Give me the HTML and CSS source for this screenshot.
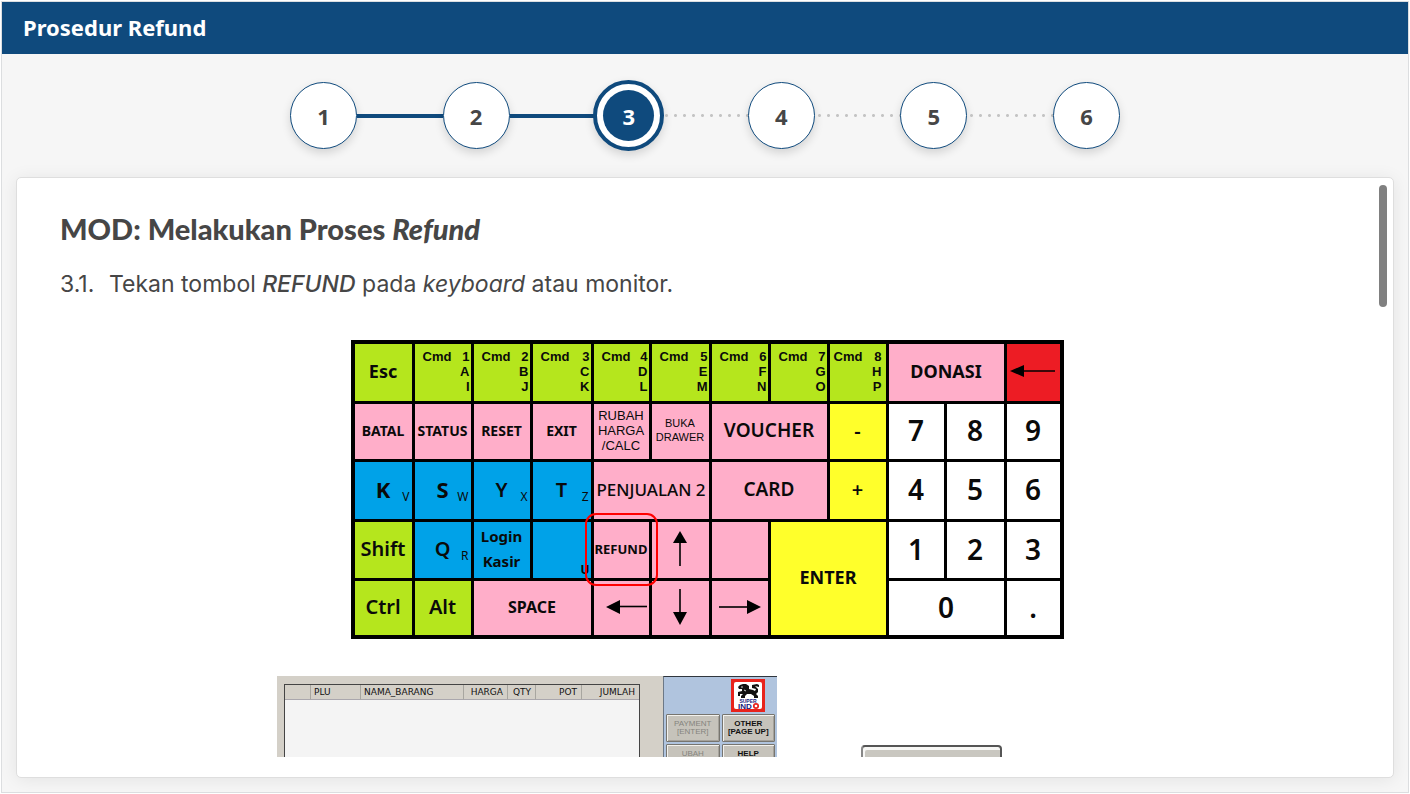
FILE: index.html
```html
<!DOCTYPE html>
<html lang="id">
<head>
<meta charset="utf-8">
<title>Prosedur Refund</title>
<link rel="stylesheet" href="styles.css">
</head>
<body>
<div class="app">
  <header class="topbar"><h1 class="topbar-title">Prosedur Refund</h1></header>
  <nav class="stepper">
    <button type="button" class="step">1</button>
    <span class="link done"></span>
    <button type="button" class="step">2</button>
    <span class="link done"></span>
    <button type="button" class="step active"><span class="step-core">3</span></button>
    <span class="link"></span>
    <button type="button" class="step">4</button>
    <span class="link"></span>
    <button type="button" class="step">5</button>
    <span class="link"></span>
    <button type="button" class="step">6</button>
  </nav>
  <main class="card">
    <div class="scroll">
      <h2 class="title">MOD: Melakukan Proses <em>Refund</em></h2>
      <div class="instruction"><span class="number">3.1.</span><p class="sentence">Tekan tombol <em class="strong">REFUND</em> pada <em>keyboard</em> atau monitor.</p></div>
      <div class="keyboard">
        <button type="button" class="key green k18">Esc</button>
        <button type="button" class="key green cmd"><span class="cmd-top"><span>Cmd</span><span>1</span></span><span>A</span><span>I</span></button>
        <button type="button" class="key green cmd"><span class="cmd-top"><span>Cmd</span><span>2</span></span><span>B</span><span>J</span></button>
        <button type="button" class="key green cmd"><span class="cmd-top"><span>Cmd</span><span>3</span></span><span>C</span><span>K</span></button>
        <button type="button" class="key green cmd"><span class="cmd-top"><span>Cmd</span><span>4</span></span><span>D</span><span>L</span></button>
        <button type="button" class="key green cmd"><span class="cmd-top"><span>Cmd</span><span>5</span></span><span>E</span><span>M</span></button>
        <button type="button" class="key green cmd"><span class="cmd-top"><span>Cmd</span><span>6</span></span><span>F</span><span>N</span></button>
        <button type="button" class="key green cmd"><span class="cmd-top"><span>Cmd</span><span>7</span></span><span>G</span><span>O</span></button>
        <button type="button" class="key green cmd last"><span class="cmd-top"><span>Cmd</span><span>8</span></span><span>H</span><span>P</span></button>
        <button type="button" class="key pink wide k18">DONASI</button>
        <button type="button" class="key red" aria-label="Backspace"><svg width="46" height="14" viewBox="0 0 46 14"><path d="M12 7H45" stroke="#000" stroke-width="1.6"/><path d="M0 7L14 1V13Z"/></svg></button>

        <button type="button" class="key pink k14">BATAL</button>
        <button type="button" class="key pink k14">STATUS</button>
        <button type="button" class="key pink k14">RESET</button>
        <button type="button" class="key pink k14">EXIT</button>
        <button type="button" class="key pink thin">RUBAH<br>HARGA<br>/CALC</button>
        <button type="button" class="key pink thin small">BUKA<br>DRAWER</button>
        <button type="button" class="key pink wide k19">VOUCHER</button>
        <button type="button" class="key yellow k20">-</button>
        <button type="button" class="key white digit">7</button>
        <button type="button" class="key white digit">8</button>
        <button type="button" class="key white digit">9</button>

        <button type="button" class="key blue k22">K<span class="alt">V</span></button>
        <button type="button" class="key blue k22">S<span class="alt">W</span></button>
        <button type="button" class="key blue k20">Y<span class="alt">X</span></button>
        <button type="button" class="key blue k20">T<span class="alt">Z</span></button>
        <button type="button" class="key pink wide k17">PENJUALAN 2</button>
        <button type="button" class="key pink wide k19">CARD</button>
        <button type="button" class="key yellow k20">+</button>
        <button type="button" class="key white digit">4</button>
        <button type="button" class="key white digit">5</button>
        <button type="button" class="key white digit">6</button>

        <button type="button" class="key green k20">Shift</button>
        <button type="button" class="key blue k20">Q<span class="alt">R</span></button>
        <button type="button" class="key blue login">Login<br>Kasir</button>
        <button type="button" class="key blue"><span class="alt bold">U</span></button>
        <button type="button" class="key pink marked k13">REFUND</button>
        <button type="button" class="key pink" aria-label="Atas"><svg width="14" height="36" viewBox="0 0 14 36"><path d="M7 8V35" stroke="#000" stroke-width="1.6"/><path d="M7 0L14 12H0Z"/></svg></button>
        <button type="button" class="key pink" aria-label="Kosong"></button>
        <button type="button" class="key yellow enter k18">ENTER</button>
        <button type="button" class="key white digit">1</button>
        <button type="button" class="key white digit">2</button>
        <button type="button" class="key white digit">3</button>

        <button type="button" class="key green k20">Ctrl</button>
        <button type="button" class="key green k20">Alt</button>
        <button type="button" class="key pink wide k16">SPACE</button>
        <button type="button" class="key pink arrow-left" aria-label="Kiri"><svg width="42" height="14" viewBox="0 0 42 14"><path d="M10 6.500H41" stroke="#000" stroke-width="1.6"/><path d="M0 7L14 0V14Z"/></svg></button>
        <button type="button" class="key pink" aria-label="Bawah"><svg width="14" height="36" viewBox="0 0 14 36"><path d="M7 0V26" stroke="#000" stroke-width="1.6"/><path d="M7 36L14 23H0Z"/></svg></button>
        <button type="button" class="key pink" aria-label="Kanan"><svg width="42" height="14" viewBox="0 0 42 14"><path d="M0 7H32" stroke="#000" stroke-width="1.6"/><path d="M42 7L28 0V14Z"/></svg></button>
        <button type="button" class="key white wide digit">0</button>
        <button type="button" class="key white digit">.</button>
      </div>
      <div class="pictures">
        <div class="monitor">
          <div class="monitor-main">
            <table class="items">
              <colgroup><col class="c-mark"><col class="c-plu"><col class="c-name"><col class="c-price"><col class="c-qty"><col class="c-pot"><col class="c-sum"></colgroup>
              <thead><tr><th></th><th>PLU</th><th>NAMA_BARANG</th><th class="right">HARGA</th><th class="right">QTY</th><th class="right">POT</th><th class="right">JUMLAH</th></tr></thead>
              <tbody><tr><td colspan="7"></td></tr></tbody>
            </table>
          </div>
          <div class="monitor-side">
            <svg class="logo" width="34" height="33" viewBox="0 0 34 33" role="img" aria-label="Super Indo">
              <rect width="34" height="33" fill="#e8231c"/>
              <rect x="3" y="3" width="28" height="27" rx="2" fill="#fff"/>
              <path fill="#111" d="M7 8L9 6L12 5H15L18 7V10L22 11L24 12L25 10L21 9V6L26 5L28 6V8L24 7L27 10V13L25 15L27 17V19H23V17L20 15H16L14 17V19H10V17L12 15H9V17H7V13L11 12V10H8Z"/>
              <path d="M10 8H12M13 11L15 12" stroke="#fff" stroke-width=".8"/>
              <text x="17" y="23.500" text-anchor="middle" class="logo-super">SUPER</text>
              <text x="7" y="30" class="logo-indo">IND</text>
              <circle cx="25" cy="27" r="2.200" fill="none" stroke="#e8231c" stroke-width="1.700"/>
            </svg>
            <div class="commands">
              <button type="button" class="command" disabled>PAYMENT<br>[ENTER]</button>
              <button type="button" class="command">OTHER<br>[PAGE UP]</button>
              <button type="button" class="command single" disabled>UBAH</button>
              <button type="button" class="command single">HELP</button>
            </div>
          </div>
        </div>
        <button type="button" class="zoomed-key" aria-label="Refund"></button>
      </div>
    </div>
    <div class="thumb"></div>
  </main>
</div>
</body>
</html>
```
FILE: styles.css
```css
* { box-sizing: border-box; }
body { margin: 0; background: #fff; color: #464646; font-family: "Noto Sans", sans-serif; }
button { margin: 0; padding: 0; border: 0; font: inherit; color: inherit; }
.app { display: flex; flex-direction: column; height: calc(100vh - 2px); margin: 1px; border: 1px solid #dcdee0; background: #f6f6f6; overflow: hidden; }
.topbar { display: flex; align-items: center; flex: none; height: 52px; padding: 0 21px 2px; background: #0f4a7d; }
.topbar-title { margin: 0; color: #fff; font-size: 22px; line-height: 30px; font-weight: 700; }

.stepper { display: flex; align-items: center; flex: none; width: 100%; max-width: 830px; height: 123px; margin: 0 auto; }
.step { display: flex; align-items: center; justify-content: center; flex: none; width: 67px; height: 67px; border: 1px solid #0f4a7d; border-radius: 50%; background: #fff; font-size: 22px; line-height: 30px; font-weight: 700; box-shadow: 0 4px 10px rgba(0, 0, 0, .14); }
.step.active { width: 71px; height: 71px; margin: 0 -2px; border-width: 4px; color: #fff; }
.step-core { display: flex; align-items: center; justify-content: center; width: 51px; height: 51px; border-radius: 50%; background: #0f4a7d; }
.link { flex: 1; height: 3px; background: radial-gradient(circle, #c4c4c4 1px, transparent 2px) 0 0 / 9px 3px; }
.link.done { height: 4px; background: #0f4a7d; }

.card { display: flex; flex: 1; min-height: 0; margin: 0 14px 14px; padding: 7px 6px 20px 43px; border: 1px solid #dedede; border-radius: 5px; background: #fff; box-shadow: 0 2px 18px rgba(0, 0, 0, .08); }
.scroll { flex: 1; min-width: 0; padding-right: 25px; overflow: hidden; }
.thumb { flex: none; width: 8px; height: 122px; border-radius: 4px; background: #808080; }
.title { margin: 24px 0 0; font-family: Lato, sans-serif; font-size: 29px; line-height: 40px; font-weight: 900; }
.instruction { display: flex; margin-top: 19px; font-family: Inter, sans-serif; font-size: 23px; line-height: 32px; }
.number { flex: none; width: 49px; }
.sentence { margin: 0; }
.strong { font-weight: 500; }

.keyboard { display: grid; grid-template-columns: 57px 56px 56px 58px 55px 57px 56px 56px 56px 55px 57px 53px; grid-template-rows: 57px 55px 57px 56px 54px; gap: 3px; width: max-content; margin: 40px auto 0; padding: 4px; background: #000; }
.key { position: relative; display: flex; align-items: center; justify-content: center; min-width: 0; padding-bottom: 3px; color: #0a0a0a; font-weight: 700; white-space: nowrap; }
.green { background: #b5e61d; }
.pink { background: #ffaec9; }
.blue { background: #00a2e8; }
.yellow { background: #ffff2b; }
.red { background: #ed1c24; }
.white { background: #fff; }
.wide { grid-column: span 2; }
.enter { grid-column: 8 / span 2; grid-row: 4 / span 2; }
.k13 { font-size: 13px; }
.k14 { font-size: 14px; }
.k16 { font-size: 16px; }
.k17 { font-size: 17px; font-weight: 500; }
.k18 { font-size: 18px; }
.k19 { font-size: 19px; font-weight: 600; }
.k20 { font-size: 20px; font-weight: 600; }
.k22 { font-size: 22px; }
.digit { font-size: 28px; font-weight: 600; }
.cmd { flex-direction: column; align-items: stretch; text-align: right; padding: 0 1px 2px 8px; font-family: "Liberation Sans", sans-serif; font-size: 13px; line-height: 15px; }
.cmd.last { padding-right: 4px; padding-left: 4px; }
.cmd-top { display: flex; justify-content: space-between; }
.thin { font-family: "Liberation Sans", sans-serif; font-size: 13px; line-height: 15px; font-weight: 400; }
.thin.small { font-size: 11px; line-height: 14px; }
.login { font-size: 15px; line-height: 25px; }
.alt { position: absolute; right: 2px; bottom: 14px; font-size: 12px; line-height: 16px; font-weight: 400; }
.alt.bold { right: 1px; bottom: 0; font-weight: 700; }
.arrow-left { padding-left: 12px; }
.marked::after { content: ""; position: absolute; inset: -9px -9px -8px -9px; z-index: 1; border: 2px solid #f00; border-radius: 11px; }

.pictures { display: flex; align-items: flex-start; justify-content: center; gap: 84px; margin-top: 37px; padding-right: 135px; }
.monitor { display: flex; width: 500px; height: 300px; background: #d4d0c8; }
.monitor-main { flex: 1; padding: 8px 23px 0 7px; }
.items { width: 356px; height: 292px; table-layout: fixed; border-collapse: separate; border-spacing: 0; border: 1px solid #444; background: #f4f4f4; }
.items th { height: 14px; padding: 1px 4px 0 3px; border-left: 1px solid #a8a6a0; border-bottom: 1px solid #aaa7ad; background: #d4d0c8; color: #111; font-family: "DejaVu Sans", sans-serif; font-size: 9px; line-height: 13px; font-weight: 400; text-align: left; white-space: nowrap; }
.items th:first-child { border-left: 0; }
.items td { padding: 0; }
.items .right { text-align: right; }
.c-mark { width: 25px; }
.c-plu { width: 50px; }
.c-name { width: 103px; }
.c-price { width: 44px; }
.c-qty { width: 28px; }
.c-pot { width: 46px; }
.monitor-side { flex: none; width: 114px; padding: 2px 2px 0 2px; border-top: 1px solid #30363d; border-left: 1px solid #6c7886; background: #b0c4de; }
.logo { display: block; margin: 0 0 2px 65px; }
.logo-super { fill: #19227c; font: 700 5px "Liberation Sans", sans-serif; }
.logo-indo { fill: #19227c; font: 700 8px "Liberation Sans", sans-serif; }
.commands { display: grid; grid-template-columns: 1fr 1fr; gap: 2px; }
.command { height: 28px; border: 1px solid #77756f; border-radius: 1px; box-shadow: inset 1px 1px #f3f2ee, inset -1px -1px #a5a29b; background: #c6c3bb; color: #111; font-family: "Liberation Sans", sans-serif; font-size: 8px; line-height: 8px; font-weight: 700; white-space: nowrap; }
.command:disabled { color: #85837e; font-weight: 400; }
.command.single { padding-bottom: 8px; }
.zoomed-key { width: 141px; height: 60px; margin-top: 69px; border: 2px solid #555; border-left-color: #888; border-radius: 4px; background: #c9c7c0; box-shadow: inset 2px 3px #f7f7f5; }
```
